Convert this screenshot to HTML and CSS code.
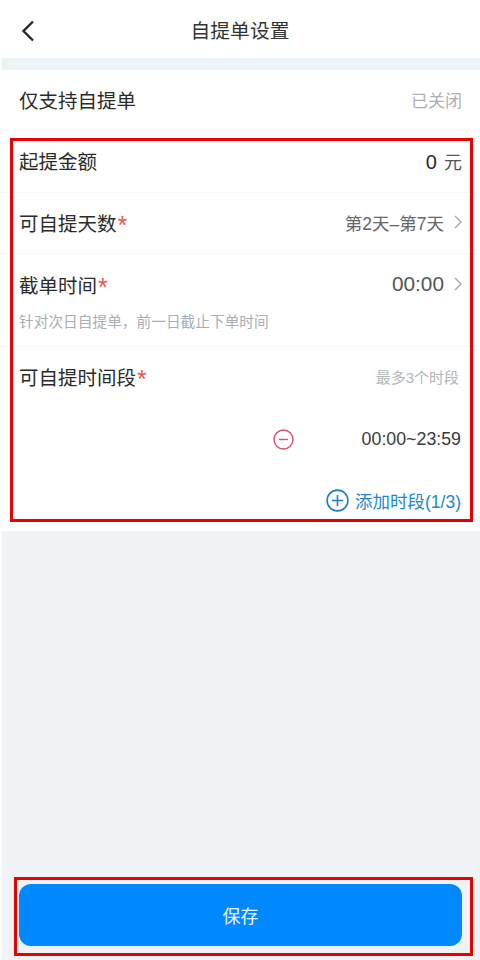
FILE: index.html
```html
<!DOCTYPE html>
<html lang="zh-CN">
<head>
  <meta charset="UTF-8" />
  <title>自提单设置</title>
  <link rel="stylesheet" href="styles.css">
</head>
<body>
  <div class="page">
    <header class="topbar">
      <svg class="back" width="14" height="22" viewBox="0 0 14 22"><path d="M12 1.5 2.5 11 12 20.500"/></svg>
      <h1>自提单设置</h1>
    </header>

    <div class="gap"></div>

    <section class="panel">
      <div class="row row-first">
        <span class="label">仅支持自提单</span>
        <span class="closed">已关闭</span>
      </div>
      <div class="row row-amount">
        <span class="label">起提金额</span>
        <span class="amount"><b>0</b> 元</span>
      </div>
      <div class="row row-days">
        <span class="label">可自提天数<i>*</i></span>
        <span class="value">第2天–第7天<svg class="chev" width="8" height="14" viewBox="0 0 8 14"><path d="M1 1 7 7 1 13"/></svg></span>
      </div>
      <div class="row-cutoff">
        <div class="cutoff-line">
          <span class="label">截单时间<i>*</i></span>
          <span class="value time">00:00<svg class="chev" width="8" height="14" viewBox="0 0 8 14"><path d="M1 1 7 7 1 13"/></svg></span>
        </div>
        <p class="hint">针对次日自提单，前一日截止下单时间</p>
      </div>
      <div class="slots">
        <div class="slots-head">
          <span class="label">可自提时间段<i>*</i></span>
          <span class="max">最多3个时段</span>
        </div>
        <div class="slot">
          <svg class="minus" width="21" height="21" viewBox="0 0 21 21"><circle cx="10.500" cy="10.500" r="9.500"/><path d="M6 10.500h9"/></svg>
          <span class="slot-time">00:00~23:59</span>
        </div>
        <div class="add">
          <svg class="plus" width="23" height="23" viewBox="0 0 23 23"><circle cx="11.500" cy="11.500" r="10.400"/><path d="M6 11.500h11M11.500 6v11"/></svg>
          <span>添加时段(1/3)</span>
        </div>
      </div>
    </section>

    <div class="spacer"></div>

    <footer class="footer">
      <button class="save">保存</button>
    </footer>
  </div>

  <div class="mark mark-form"></div>
  <div class="mark mark-save"></div>
</body>
</html>
```

FILE: styles.css
```css
* { box-sizing: border-box; }
body { margin: 0; background: #fff; font-family: "Liberation Sans", "Noto Sans CJK SC", sans-serif; color: #2b2b2b; overflow: hidden; }
.page { width: 480px; height: 960px; padding-left: 2px; display: flex; flex-direction: column; background: #fbfcfc; }
.topbar { height: 58px; margin-left: -2px; background: #fff; display: flex; align-items: center; justify-content: center; position: relative; }
.topbar h1 { margin: 0; font-size: 19.800px; font-weight: 400; color: #333; }
.back { position: absolute; left: 21px; top: 20px; }
.back path { fill: none; stroke: #2b2b2b; stroke-width: 2.400; }
.gap { height: 12px; background: #eef2f5; }
.panel { margin-left: -2px; background: #fff; height: 461px; }
.spacer { flex: 1; background: #f0f3f6; }
.row { display: flex; align-items: center; justify-content: space-between; padding: 0 18px 0 19px; border-bottom: 1px solid #f5f6f7; }
.row-first { height: 61px; padding-bottom: 2px; }
.row-amount { height: 62px; padding-bottom: 2px; }
.row-days { height: 61px; padding-bottom: 2px; }
.label { font-size: 19.500px; color: #2a2a2a; white-space: nowrap; }
.label i { font-style: normal; font-size: 25px; line-height: 0; vertical-align: -3px; color: #e8584a; margin-left: 1px; }
.closed { font-size: 17px; color: #aeb0b2; }
.amount { font-size: 18px; color: #555; }
.amount b { font-weight: 400; font-size: 20px; color: #2b2b2b; margin-right: 2px; }
.value { display: flex; align-items: center; gap: 10px; font-size: 17.500px; color: #666; }
.value.time { font-size: 20.800px; color: #555; }
.chev path { fill: none; stroke: #a2a4a6; stroke-width: 1.300; }
.row-cutoff { height: 93px; padding: 18px 18px 0 19px; border-bottom: 1px solid #f5f6f7; }
.cutoff-line { display: flex; align-items: center; justify-content: space-between; height: 24px; }
.hint { margin: 16px 0 0; font-size: 14.700px; line-height: 20px; color: #a9adb3; white-space: nowrap; }
.slots { padding: 15px 19px 0 19px; }
.slots-head { display: flex; align-items: center; justify-content: space-between; height: 28px; padding-right: 2px; }
.max { font-size: 15px; color: #b4b6b8; }
.slot { display: flex; align-items: center; justify-content: space-between; margin-top: 39px; padding-left: 254px; }
.minus circle, .minus path { fill: none; stroke: #d9536a; stroke-width: 1.400; }
.slot-time { font-size: 17.800px; color: #3a3a3a; }
.add { display: flex; align-items: center; justify-content: flex-end; gap: 6px; margin-top: 38px; font-size: 17.500px; color: #2387c9; }
.plus circle, .plus path { fill: none; stroke: #1c7fc4; stroke-width: 1.600; }
.footer { height: 94px; background: #f0f3f6; padding: 18px 18px 0 17px; }
.save { display: block; width: 100%; height: 62px; border: none; border-radius: 12px; background: #0088ff; color: #e8f3ff; font-family: inherit; font-size: 18px; }
.mark { position: absolute; border: 3.500px solid #e60000; pointer-events: none; }
.mark-form { left: 10px; top: 138px; width: 463px; height: 384px; }
.mark-save { left: 14px; top: 877px; width: 459px; height: 79px; }
```
